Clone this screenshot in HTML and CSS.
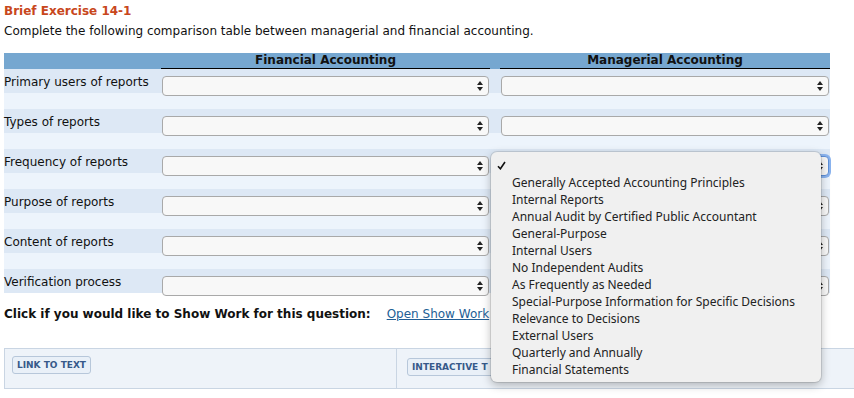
FILE: index.html
```html
<!DOCTYPE html>
<html lang="en">
  <head>
    <meta charset="UTF-8" />
    <meta name="viewport" content="width=device-width, initial-scale=1.0" />
    <title>Brief Exercise 14-1</title>
    <link rel="stylesheet" href="styles.css">
  </head>
  <body>
    <div class="page">
      <h1 class="title">Brief Exercise 14-1</h1>
      <p class="intro">Complete the following comparison table between managerial and financial accounting.</p>

      <div class="compare">
        <div class="compare-head">
          <div></div>
          <div class="col-title">Financial Accounting</div>
          <div></div>
          <div class="col-title">Managerial Accounting</div>
        </div>
        <div class="compare-row">
          <div class="row-label">Primary users of reports</div>
          <div class="picker"><span class="arrows"><i class="up"></i><i class="down"></i></span></div>
          <div></div>
          <div class="picker"><span class="arrows"><i class="up"></i><i class="down"></i></span></div>
        </div>
        <div class="compare-row">
          <div class="row-label">Types of reports</div>
          <div class="picker"><span class="arrows"><i class="up"></i><i class="down"></i></span></div>
          <div></div>
          <div class="picker"><span class="arrows"><i class="up"></i><i class="down"></i></span></div>
        </div>
        <div class="compare-row">
          <div class="row-label">Frequency of reports</div>
          <div class="picker"><span class="arrows"><i class="up"></i><i class="down"></i></span></div>
          <div></div>
          <div class="picker is-focused"><span class="arrows"><i class="up"></i><i class="down"></i></span></div>
        </div>
        <div class="compare-row">
          <div class="row-label">Purpose of reports</div>
          <div class="picker"><span class="arrows"><i class="up"></i><i class="down"></i></span></div>
          <div></div>
          <div class="picker"><span class="arrows"><i class="up"></i><i class="down"></i></span></div>
        </div>
        <div class="compare-row">
          <div class="row-label">Content of reports</div>
          <div class="picker"><span class="arrows"><i class="up"></i><i class="down"></i></span></div>
          <div></div>
          <div class="picker"><span class="arrows"><i class="up"></i><i class="down"></i></span></div>
        </div>
        <div class="compare-row">
          <div class="row-label">Verification process</div>
          <div class="picker"><span class="arrows"><i class="up"></i><i class="down"></i></span></div>
          <div></div>
          <div class="picker"><span class="arrows"><i class="up"></i><i class="down"></i></span></div>
        </div>
      </div>

      <div class="show-work">
        <strong>Click if you would like to Show Work for this question:</strong>
        <a href="#" class="show-link">Open Show Work</a>
      </div>

      <div class="tools">
        <div class="tools-cell"><button class="tool-btn">LINK TO TEXT</button></div>
        <div class="tools-cell tools-right"><button class="tool-btn tool-btn-cut">INTERACTIVE T</button></div>
      </div>
    </div>

    <!-- open select menu for Managerial / Frequency -->
    <ul class="dropdown">
      <li class="checked">
        <svg width="9" height="9" viewBox="0 0 9 9"><path d="M1 5.2 L3.4 7.8 L8 1" fill="none" stroke="#111" stroke-width="1.6"/></svg>
      </li>
      <li>Generally Accepted Accounting Principles</li>
      <li>Internal Reports</li>
      <li>Annual Audit by Certified Public Accountant</li>
      <li>General-Purpose</li>
      <li>Internal Users</li>
      <li>No Independent Audits</li>
      <li>As Frequently as Needed</li>
      <li>Special-Purpose Information for Specific Decisions</li>
      <li>Relevance to Decisions</li>
      <li>External Users</li>
      <li>Quarterly and Annually</li>
      <li>Financial Statements</li>
    </ul>
  </body>
</html>
```

FILE: styles.css
```css
body {
  margin: 0;
  font-family: "DejaVu Sans", Verdana, sans-serif;
  font-size: 12px;
  color: #111;
  background-color: #fff;
  overflow: hidden;
}
.page {
  padding: 3px 0 0 4px;
}
.title {
  margin: 0;
  font-size: 12px;
  line-height: 16px;
  font-weight: bold;
  color: #c8471c;
}
.intro {
  margin: 4px 0 0;
  line-height: 16px;
}
.compare {
  margin-top: 14px;
  width: 826px;
  background-color: #edf4fc;
}
.compare-head,
.compare-row {
  display: grid;
  grid-template-columns: 157px 329px 10px 330px;
}
.compare-head {
  height: 16px;
  background-color: #76a7d0;
}
.col-title {
  font-weight: bold;
  text-align: center;
  line-height: 15px;
  border-bottom: 1px solid #000;
}
.compare-row {
  height: 24px;
  background-color: #dde8f5;
}
.compare-row + .compare-row {
  margin-top: 16px;
}
.row-label {
  padding-top: 5px;
  line-height: 16px;
}
.picker {
  box-sizing: border-box;
  height: 20px;
  margin: 7px 1px 0;
  padding-right: 5px;
  border: 1px solid #a9a9a9;
  border-radius: 4px;
  background-color: #f8f8f8;
  display: flex;
  justify-content: flex-end;
  align-items: center;
}
.picker.is-focused {
  border-color: #5d8fd8;
  box-shadow: 0 0 0 2px #8ab3ee;
}
.arrows {
  display: flex;
  flex-direction: column;
  gap: 2px;
}
.arrows i {
  width: 0;
  height: 0;
  border-left: 3px solid transparent;
  border-right: 3px solid transparent;
}
.arrows .up {
  border-bottom: 4px solid #222;
}
.arrows .down {
  border-top: 4px solid #222;
}
.show-work {
  margin-top: 13px;
  display: flex;
  gap: 16px;
  line-height: 16px;
}
.show-link {
  color: #225e95;
}
.tools {
  margin-top: 26px;
  width: 880px;
  height: 41px;
  box-sizing: border-box;
  display: grid;
  grid-template-columns: 392px 1fr;
  border: 1px solid #c9d5e3;
  background-color: #eef3f9;
}
.tools-cell {
  padding: 7px;
  border-right: 1px solid #c9d5e3;
}
.tools-right {
  padding: 9px 10px;
  border-right: none;
}
.tool-btn {
  height: 18px;
  padding: 0 4px;
  font-family: "DejaVu Sans", Verdana, sans-serif;
  font-size: 9px;
  font-weight: bold;
  line-height: 16px;
  color: #36598a;
  background-color: #e9f0f8;
  border: 1px solid #b7c7da;
  border-radius: 3px;
}
.tool-btn-cut {
  width: 90px;
  text-align: left;
  white-space: nowrap;
  border-radius: 3px 0 0 3px;
}
.dropdown {
  position: absolute;
  left: 491px;
  top: 152px;
  width: 330px;
  height: 230px;
  box-sizing: border-box;
  margin: 0;
  padding: 5px 0 4px;
  list-style: none;
  background-color: #f0f0f0;
  border-radius: 6px;
  box-shadow: 0 3px 10px rgba(0, 0, 0, 0.28), 0 0 0 1px rgba(0, 0, 0, 0.1);
  font-family: "Noto Sans", "Liberation Sans", sans-serif;
  font-size: 12px;
  color: #222;
}
.dropdown li {
  height: 17px;
  line-height: 17px;
  padding-left: 21px;
}
.dropdown li.checked {
  padding-left: 6px;
  display: flex;
  align-items: center;
}
```
